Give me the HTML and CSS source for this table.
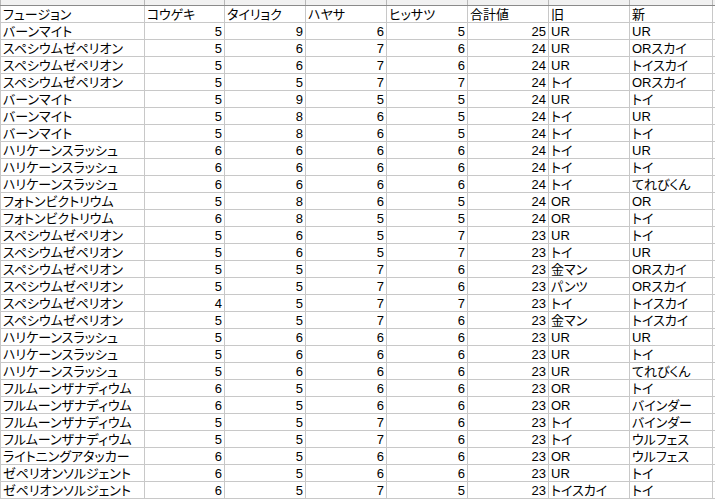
FILE: index.html
```html
<!DOCTYPE html>
<html lang="ja">
<head>
<meta charset="utf-8">
<link rel="stylesheet" href="styles.css">
</head>
<body>
<div class="strip">
<div></div><div></div><div></div><div></div><div></div><div></div><div></div><div></div><div></div>
</div>
<div class="sheet">
<div class="c">フュージョン</div><div class="c">コウゲキ</div><div class="c">タイリョク</div><div class="c">ハヤサ</div><div class="c">ヒッサツ</div><div class="c">合計値</div><div class="c">旧</div><div class="c">新</div><div class="c"></div>
<div class="c">バーンマイト</div><div class="c n">5</div><div class="c n">9</div><div class="c n">6</div><div class="c n">5</div><div class="c n">25</div><div class="c">UR</div><div class="c">UR</div><div class="c"></div>
<div class="c">スペシウムゼペリオン</div><div class="c n">5</div><div class="c n">6</div><div class="c n">7</div><div class="c n">6</div><div class="c n">24</div><div class="c">UR</div><div class="c">ORスカイ</div><div class="c"></div>
<div class="c">スペシウムゼペリオン</div><div class="c n">5</div><div class="c n">6</div><div class="c n">7</div><div class="c n">6</div><div class="c n">24</div><div class="c">UR</div><div class="c">トイスカイ</div><div class="c"></div>
<div class="c">スペシウムゼペリオン</div><div class="c n">5</div><div class="c n">5</div><div class="c n">7</div><div class="c n">7</div><div class="c n">24</div><div class="c">トイ</div><div class="c">ORスカイ</div><div class="c"></div>
<div class="c">バーンマイト</div><div class="c n">5</div><div class="c n">9</div><div class="c n">5</div><div class="c n">5</div><div class="c n">24</div><div class="c">UR</div><div class="c">トイ</div><div class="c"></div>
<div class="c">バーンマイト</div><div class="c n">5</div><div class="c n">8</div><div class="c n">6</div><div class="c n">5</div><div class="c n">24</div><div class="c">トイ</div><div class="c">UR</div><div class="c"></div>
<div class="c">バーンマイト</div><div class="c n">5</div><div class="c n">8</div><div class="c n">6</div><div class="c n">5</div><div class="c n">24</div><div class="c">トイ</div><div class="c">トイ</div><div class="c"></div>
<div class="c">ハリケーンスラッシュ</div><div class="c n">6</div><div class="c n">6</div><div class="c n">6</div><div class="c n">6</div><div class="c n">24</div><div class="c">トイ</div><div class="c">UR</div><div class="c"></div>
<div class="c">ハリケーンスラッシュ</div><div class="c n">6</div><div class="c n">6</div><div class="c n">6</div><div class="c n">6</div><div class="c n">24</div><div class="c">トイ</div><div class="c">トイ</div><div class="c"></div>
<div class="c">ハリケーンスラッシュ</div><div class="c n">6</div><div class="c n">6</div><div class="c n">6</div><div class="c n">6</div><div class="c n">24</div><div class="c">トイ</div><div class="c">てれびくん</div><div class="c"></div>
<div class="c">フォトンビクトリウム</div><div class="c n">5</div><div class="c n">8</div><div class="c n">6</div><div class="c n">5</div><div class="c n">24</div><div class="c">OR</div><div class="c">OR</div><div class="c"></div>
<div class="c">フォトンビクトリウム</div><div class="c n">6</div><div class="c n">8</div><div class="c n">5</div><div class="c n">5</div><div class="c n">24</div><div class="c">OR</div><div class="c">トイ</div><div class="c"></div>
<div class="c">スペシウムゼペリオン</div><div class="c n">5</div><div class="c n">6</div><div class="c n">5</div><div class="c n">7</div><div class="c n">23</div><div class="c">UR</div><div class="c">トイ</div><div class="c"></div>
<div class="c">スペシウムゼペリオン</div><div class="c n">5</div><div class="c n">6</div><div class="c n">5</div><div class="c n">7</div><div class="c n">23</div><div class="c">トイ</div><div class="c">UR</div><div class="c"></div>
<div class="c">スペシウムゼペリオン</div><div class="c n">5</div><div class="c n">5</div><div class="c n">7</div><div class="c n">6</div><div class="c n">23</div><div class="c">金マン</div><div class="c">ORスカイ</div><div class="c"></div>
<div class="c">スペシウムゼペリオン</div><div class="c n">5</div><div class="c n">5</div><div class="c n">7</div><div class="c n">6</div><div class="c n">23</div><div class="c">パンツ</div><div class="c">ORスカイ</div><div class="c"></div>
<div class="c">スペシウムゼペリオン</div><div class="c n">4</div><div class="c n">5</div><div class="c n">7</div><div class="c n">7</div><div class="c n">23</div><div class="c">トイ</div><div class="c">トイスカイ</div><div class="c"></div>
<div class="c">スペシウムゼペリオン</div><div class="c n">5</div><div class="c n">5</div><div class="c n">7</div><div class="c n">6</div><div class="c n">23</div><div class="c">金マン</div><div class="c">トイスカイ</div><div class="c"></div>
<div class="c">ハリケーンスラッシュ</div><div class="c n">5</div><div class="c n">6</div><div class="c n">6</div><div class="c n">6</div><div class="c n">23</div><div class="c">UR</div><div class="c">UR</div><div class="c"></div>
<div class="c">ハリケーンスラッシュ</div><div class="c n">5</div><div class="c n">6</div><div class="c n">6</div><div class="c n">6</div><div class="c n">23</div><div class="c">UR</div><div class="c">トイ</div><div class="c"></div>
<div class="c">ハリケーンスラッシュ</div><div class="c n">5</div><div class="c n">6</div><div class="c n">6</div><div class="c n">6</div><div class="c n">23</div><div class="c">UR</div><div class="c">てれびくん</div><div class="c"></div>
<div class="c">フルムーンザナディウム</div><div class="c n">6</div><div class="c n">5</div><div class="c n">6</div><div class="c n">6</div><div class="c n">23</div><div class="c">OR</div><div class="c">トイ</div><div class="c"></div>
<div class="c">フルムーンザナディウム</div><div class="c n">6</div><div class="c n">5</div><div class="c n">6</div><div class="c n">6</div><div class="c n">23</div><div class="c">OR</div><div class="c">バインダー</div><div class="c"></div>
<div class="c">フルムーンザナディウム</div><div class="c n">5</div><div class="c n">5</div><div class="c n">7</div><div class="c n">6</div><div class="c n">23</div><div class="c">トイ</div><div class="c">バインダー</div><div class="c"></div>
<div class="c">フルムーンザナディウム</div><div class="c n">5</div><div class="c n">5</div><div class="c n">7</div><div class="c n">6</div><div class="c n">23</div><div class="c">トイ</div><div class="c">ウルフェス</div><div class="c"></div>
<div class="c">ライトニングアタッカー</div><div class="c n">6</div><div class="c n">5</div><div class="c n">6</div><div class="c n">6</div><div class="c n">23</div><div class="c">OR</div><div class="c">ウルフェス</div><div class="c"></div>
<div class="c">ゼペリオンソルジェント</div><div class="c n">6</div><div class="c n">5</div><div class="c n">6</div><div class="c n">6</div><div class="c n">23</div><div class="c">UR</div><div class="c">トイ</div><div class="c"></div>
<div class="c">ゼペリオンソルジェント</div><div class="c n">6</div><div class="c n">5</div><div class="c n">7</div><div class="c n">5</div><div class="c n">23</div><div class="c">トイスカイ</div><div class="c">トイ</div><div class="c"></div>
</div>
</body>
</html>
```
FILE: styles.css
```css
html, body {
  margin: 0;
  padding: 0;
  background: #ffffff;
  overflow: hidden;
}
body {
  width: 715px;
  height: 499px;
  font-family: "Liberation Sans", "Noto Sans CJK JP", sans-serif;
  font-size: 13px;
  color: #000000;
}
.strip, .sheet {
  display: grid;
  grid-template-columns: 143px 79px 80px 80px 80px 80px 80px 82px 1fr;
  column-gap: 1px;
  padding-left: 1px;
}
.strip {
  height: 5px;
  background: #b8b8b8;
  border-bottom: 1px solid #8a8a8a;
}
.strip div {
  background: #f1f1f1;
}
.sheet {
  row-gap: 1px;
  grid-auto-rows: 16px;
  background: #c8c8c8;
  padding-bottom: 1px;
}
.c {
  background: #ffffff;
  padding: 0 2px;
  line-height: 17px;
  height: 16px;
  white-space: nowrap;
  overflow: hidden;
  font-feature-settings: "palt";
}
.n {
  text-align: right;
}
```
